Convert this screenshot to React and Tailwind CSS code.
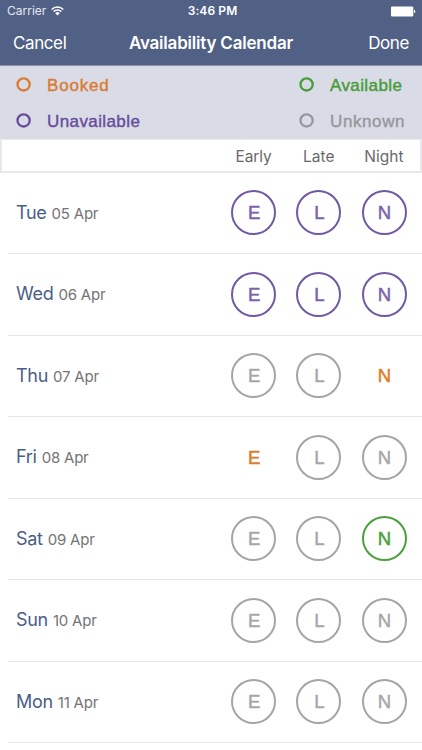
const STATUS = {
  booked: "border-transparent text-[#de7c2b]",
  available: "border-[#4c9f3e] text-[#4c9f3e]",
  unavailable: "border-[#7159a3] text-[#7b62ad]",
  unknown: "border-[#a5a5a7] text-[#a7a7aa]",
};

const DAYS = [
  { day: "Tue", date: "05 Apr", shifts: ["unavailable", "unavailable", "unavailable"] },
  { day: "Wed", date: "06 Apr", shifts: ["unavailable", "unavailable", "unavailable"] },
  { day: "Thu", date: "07 Apr", shifts: ["unknown", "unknown", "booked"] },
  { day: "Fri", date: "08 Apr", shifts: ["booked", "unknown", "unknown"] },
  { day: "Sat", date: "09 Apr", shifts: ["unknown", "unknown", "available"] },
  { day: "Sun", date: "10 Apr", shifts: ["unknown", "unknown", "unknown"] },
  { day: "Mon", date: "11 Apr", shifts: ["unknown", "unknown", "unknown"] },
];

const LETTERS = ["E", "L", "N"];

function WifiIcon() {
  return (
    <svg width="13" height="10" viewBox="0 0 13 10" fill="none" stroke="white" strokeWidth="1.5">
      <path d="M0.7 3.5a8.2 8.2 0 0 1 11.6 0" />
      <path d="M2.7 5.6a5.4 5.4 0 0 1 7.6 0" />
      <path d="M6.5 9.5 4.3 7.2a3.1 3.1 0 0 1 4.4 0Z" fill="white" stroke="none" />
    </svg>
  );
}

function BatteryIcon() {
  return (
    <svg width="25" height="11" viewBox="0 0 25 11" fill="white">
      <rect x="0" y="0.4" width="22.3" height="10" rx="1.2" />
      <path d="M23 3.7c1.8.3 1.8 3.1 0 3.4Z" />
    </svg>
  );
}

function LegendItem({ label, color, className }) {
  return (
    <div className={`flex h-[36.5px] items-center ${color}`}>
      <svg width="15" height="15" viewBox="0 0 15 15" className="shrink-0" fill="none" stroke="currentColor" strokeWidth="2.3">
        <circle cx="7.6" cy="7.4" r="6.1" />
      </svg>
      <span className={`ml-4 pt-[3px] text-[17px] leading-5 [-webkit-text-stroke:0.4px] ${className}`}>{label}</span>
    </div>
  );
}

function DayRow({ day, date, shifts }) {
  return (
    <div className="ml-2 flex h-[81.5px] items-center border-b border-[#e6e6e8] pl-2">
      <div className="flex-1 whitespace-nowrap pb-px">
        <span className="text-[18px] tracking-[-0.3px] text-[#4a5d89]">{day}</span>
        <span className="ml-[5px] text-[15px] tracking-[-0.2px] text-[#747476]">{date}</span>
      </div>
      <div className="mr-[15.5px] flex gap-[20.2px]">
        {shifts.map((status, i) => (
          <span
            key={LETTERS[i]}
            className={`flex h-[45px] w-[45px] items-center justify-center rounded-full border-2 pt-px pl-px font-['Liberation_Sans'] text-[18.5px] [-webkit-text-stroke:0.5px] ${STATUS[status]}`}
          >
            {LETTERS[i]}
          </span>
        ))}
      </div>
    </div>
  );
}

export default function App() {
  return (
    <div className="h-[750px] w-[422px] overflow-hidden bg-white font-[Inter,sans-serif]">
      <header className="h-[66px] border-b border-[#8a90a5] bg-[#516185] text-white">
        <div className="grid h-[22px] grid-cols-3 items-center pr-[6px] pl-[7px] text-[12px]">
          <div className="flex items-center gap-[5px] text-[#e4e8f0]">
            <span>Carrier</span>
            <WifiIcon />
          </div>
          <span className="pl-[2px] text-center font-semibold tracking-[0.1px]">3:46 PM</span>
          <div className="flex justify-end">
            <BatteryIcon />
          </div>
        </div>
        <div className="grid h-[43px] grid-cols-[1fr_auto_1fr] items-center px-[13px] pt-px text-[17px]">
          <button type="button" className="text-left tracking-[-0.4px]">Cancel</button>
          <h1 className="font-semibold tracking-[-0.2px]">Availability Calendar</h1>
          <button type="button" className="text-right tracking-[-0.4px]">Done</button>
        </div>
      </header>

      <div className="flex h-[73px] bg-[#d9dce6] pl-4 font-['Liberation_Sans']">
        <div className="w-[283px]">
          <LegendItem label="Booked" color="text-[#d97b32]" className="tracking-[0.8px]" />
          <LegendItem label="Unavailable" color="text-[#674c9b]" className="tracking-[0.4px]" />
        </div>
        <div>
          <LegendItem label="Available" color="text-[#479b39]" className="tracking-[0.4px]" />
          <LegendItem label="Unknown" color="text-[#96979d]" className="tracking-[0.6px]" />
        </div>
      </div>

      <div className="flex h-[33.5px] items-center justify-end border-2 border-t border-[#e9e9eb] pt-[2px] pr-[3.5px] text-[15.5px] text-[#69696b]">
        <span className="w-[65.2px] text-center tracking-[-0.1px]">Early</span>
        <span className="w-[65.2px] text-center">Late</span>
        <span className="w-[65.2px] text-center">Night</span>
      </div>

      {DAYS.map((item) => (
        <DayRow key={item.date} {...item} />
      ))}
    </div>
  );
}
